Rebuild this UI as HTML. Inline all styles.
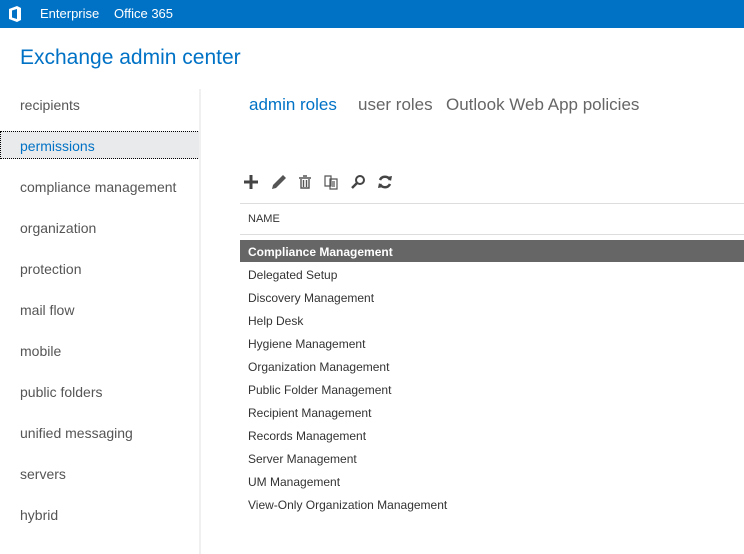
<!DOCTYPE html>
<html><head><meta charset="utf-8"><style>
body{margin:0;width:744px;height:554px;overflow:hidden;background:#fff;font-family:"Liberation Sans",sans-serif;position:relative}
.top{position:absolute;left:0;top:0;width:744px;height:28px;background:#0072c6;color:#fff;font-size:13px}
.top span{position:absolute;top:6px}
.title{position:absolute;left:20px;top:46px;font-size:21px;color:#0072c6}
.nav{position:absolute;left:20px;font-size:14px;color:#555}
.sel{position:absolute;left:0;top:131px;width:198px;height:26px;background:#e9eaec;border:1px dotted #000}
.vl{position:absolute;left:199px;top:89px;width:2px;height:465px;background:#f0f0f0}
.tab{position:absolute;top:95px;font-size:17px;color:#666}
.row{position:absolute;left:248px;font-size:12px;color:#333}
.hl{position:absolute;left:240px;top:240px;width:504px;height:22px;background:#666}
.ic{position:absolute;top:174px}
</style></head><body>
<div class="top">
<svg style="position:absolute;left:8px;top:6px" width="14" height="16" viewBox="0 0 14 16"><path d="M1 3 L9 0 L13 2 V14 L9 16 L1 13 Z M4 4.5 V11.5 L9 13 V3 Z" fill="#fff" fill-rule="evenodd"/></svg>
<span style="left:40px">Enterprise</span><span style="left:114px">Office 365</span>
<div style="position:absolute;left:64px;top:24px;width:0;height:0;border:4px solid transparent;border-bottom-color:#fff"></div>
</div>
<div class="title">Exchange admin center</div>
<div class="sel"></div>
<div class="nav" style="top:97px">recipients</div>
<div class="nav" style="top:138px;color:#0072c6">permissions</div>
<div class="nav" style="top:179px">compliance management</div>
<div class="nav" style="top:220px">organization</div>
<div class="nav" style="top:261px">protection</div>
<div class="nav" style="top:302px">mail flow</div>
<div class="nav" style="top:343px">mobile</div>
<div class="nav" style="top:384px">public folders</div>
<div class="nav" style="top:425px">unified messaging</div>
<div class="nav" style="top:466px">servers</div>
<div class="nav" style="top:507px">hybrid</div>
<div class="vl"></div>
<div class="tab" style="left:249px;color:#0072c6">admin roles</div>
<div class="tab" style="left:358px">user roles</div>
<div class="tab" style="left:446px">Outlook Web App policies</div>
<svg class="ic" style="left:243px" width="16" height="16"><path d="M8 1V15M1 8H15" stroke="#444" stroke-width="3"/></svg>
<svg class="ic" style="left:270px" width="18" height="16"><path d="M2 15 L3 11 L13 1 L16 4 L6 14 Z" fill="#555"/></svg>
<svg class="ic" style="left:298px" width="14" height="16"><path d="M1 4H13M5 2H9M3 5V14H11V5M5.5 6V13M8.5 6V13" stroke="#555" stroke-width="1.4" fill="none"/></svg>
<svg class="ic" style="left:323px" width="16" height="16"><path d="M2 2H8V12H2Z M7 5H14V15H7Z M9 8H12M9 10H12M9 12H12" stroke="#555" stroke-width="1.2" fill="#fff"/></svg>
<svg class="ic" style="left:350px" width="16" height="16"><circle cx="10" cy="6" r="4" stroke="#444" stroke-width="2" fill="none"/><path d="M7 9L2 14" stroke="#444" stroke-width="2.5"/></svg>
<svg class="ic" style="left:377px" width="16" height="16"><path d="M13 6A5.5 5.5 0 0 0 3 6M3 10A5.5 5.5 0 0 0 13 10" stroke="#444" stroke-width="2.5" fill="none"/><path d="M10 3L15 2L14 7ZM6 13L1 14L2 9Z" fill="#444"/></svg>
<div style="position:absolute;left:240px;top:203px;width:504px;height:1px;background:#ddd"></div>
<div style="position:absolute;left:248px;top:213px;font-size:11px;color:#333">NAME</div>
<div style="position:absolute;left:240px;top:234px;width:504px;height:1px;background:#ddd"></div>
<div class="hl"></div>
<div class="row" style="top:245px;color:#fff;font-weight:bold">Compliance Management</div>
<div class="row" style="top:268px">Delegated Setup</div>
<div class="row" style="top:291px">Discovery Management</div>
<div class="row" style="top:314px">Help Desk</div>
<div class="row" style="top:337px">Hygiene Management</div>
<div class="row" style="top:360px">Organization Management</div>
<div class="row" style="top:383px">Public Folder Management</div>
<div class="row" style="top:406px">Recipient Management</div>
<div class="row" style="top:429px">Records Management</div>
<div class="row" style="top:452px">Server Management</div>
<div class="row" style="top:475px">UM Management</div>
<div class="row" style="top:498px">View-Only Organization Management</div>
</body></html>
